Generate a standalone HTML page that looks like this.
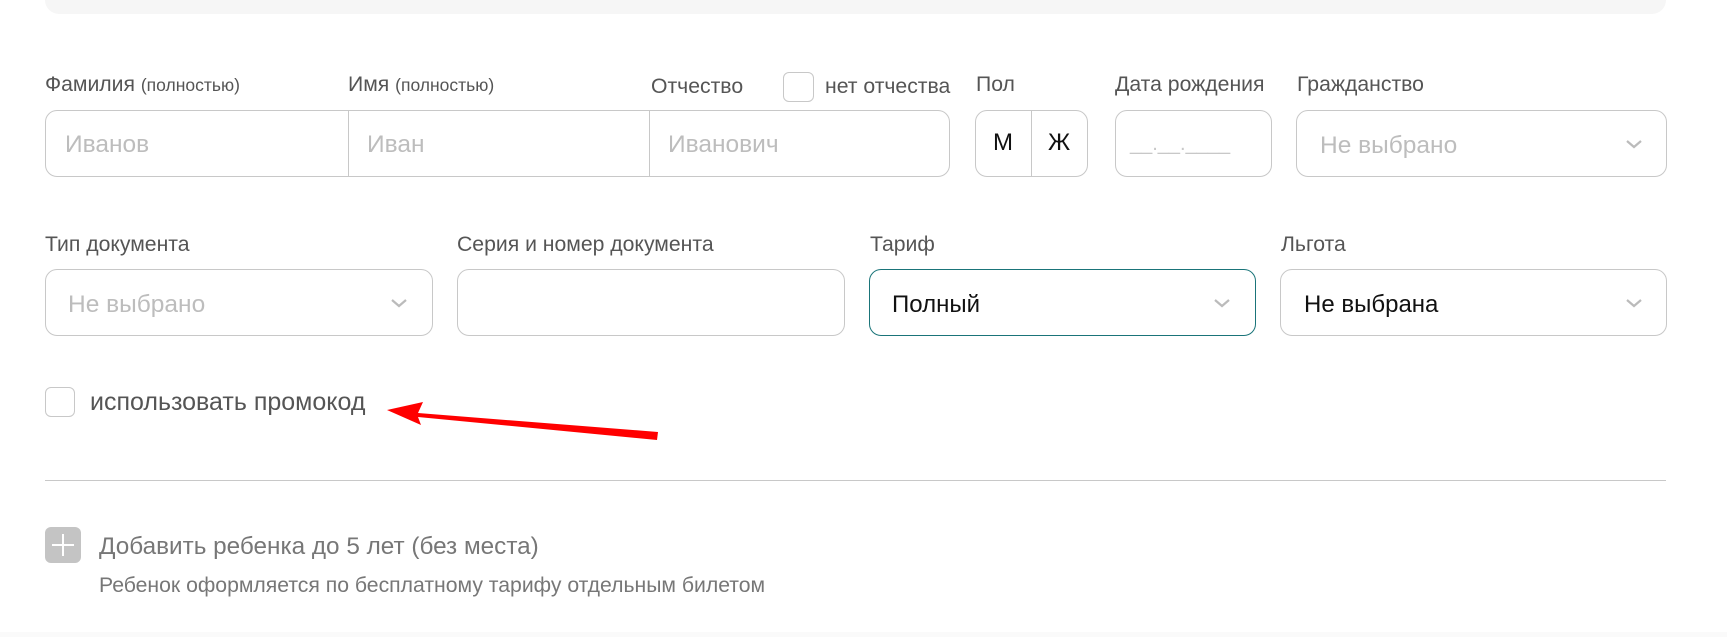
<!DOCTYPE html>
<html><head><meta charset="utf-8"><style>
*{box-sizing:border-box;margin:0;padding:0}
body{width:1727px;height:637px;background:#fff;position:relative;overflow:hidden;font-family:"Liberation Sans",sans-serif;color:#555}
.a{position:absolute;white-space:nowrap}
.lbl{font-size:21.2px;color:#555;line-height:24px}
.sm{font-size:17.5px}
.box{position:absolute;border:1px solid #c8c8c8;border-radius:12px;background:#fff}
.ph{position:absolute;font-size:24.5px;color:#bdbdbd;line-height:28px}
.val{position:absolute;font-size:24px;color:#111;line-height:28px}
.chev{position:absolute;width:18px;height:10px}
.div{position:absolute;top:0;bottom:0;width:1px;background:#c8c8c8}
.cb{position:absolute;border:1px solid #c8c8c8;border-radius:6px;background:#fff}
</style></head><body>
<div class="a" style="left:45px;top:-20px;width:1621px;height:34px;background:#f6f6f6;border-radius:0 0 14px 14px"></div>

<div class="a lbl" style="left:45px;top:73px">Фамилия <span class="sm">(полностью)</span></div>
<div class="a lbl" style="left:348px;top:73px">Имя <span class="sm">(полностью)</span></div>
<div class="a lbl" style="left:651px;top:75px">Отчество</div>
<div class="cb" style="left:783px;top:72px;width:31px;height:30px"></div>
<div class="a lbl" style="left:825px;top:75px">нет отчества</div>
<div class="a lbl" style="left:976px;top:73px">Пол</div>
<div class="a lbl" style="left:1115px;top:73px">Дата рождения</div>
<div class="a lbl" style="left:1297px;top:73px">Гражданство</div>

<div class="box" style="left:45px;top:110px;width:905px;height:67px">
 <div class="div" style="left:302px"></div><div class="div" style="left:603px"></div>
 <div class="ph" style="left:19px;top:20px">Иванов</div>
 <div class="ph" style="left:321px;top:20px">Иван</div>
 <div class="ph" style="left:622px;top:20px">Иванович</div>
</div>
<div class="box" style="left:975px;top:110px;width:113px;height:67px">
 <div class="div" style="left:55px"></div>
 <div class="val" style="left:17px;top:18px">М</div>
 <div class="val" style="left:72px;top:18px">Ж</div>
</div>
<div class="box" style="left:1115px;top:110px;width:157px;height:67px">
 <div class="ph" style="left:14px;top:19px;font-size:20px;color:#c8c8c8">__.__.____</div>
</div>
<div class="box" style="left:1296px;top:110px;width:371px;height:67px">
 <div class="ph" style="left:23px;top:21px">Не выбрано</div>
 <svg class="chev" style="left:328px;top:28px" viewBox="0 0 18 10"><path d="M2 2l7 6 7-6" fill="none" stroke="#bbb" stroke-width="2.2"/></svg>
</div>

<div class="a lbl" style="left:45px;top:233px">Тип документа</div>
<div class="a lbl" style="left:457px;top:233px">Серия и номер документа</div>
<div class="a lbl" style="left:870px;top:233px">Тариф</div>
<div class="a lbl" style="left:1281px;top:233px">Льгота</div>

<div class="box" style="left:45px;top:269px;width:388px;height:67px">
 <div class="ph" style="left:22px;top:21px">Не выбрано</div>
 <svg class="chev" style="left:344px;top:28px" viewBox="0 0 18 10"><path d="M2 2l7 6 7-6" fill="none" stroke="#bbb" stroke-width="2.2"/></svg>
</div>
<div class="box" style="left:457px;top:269px;width:388px;height:67px"></div>
<div class="box" style="left:869px;top:269px;width:387px;height:67px;border-color:#1a7479">
 <div class="val" style="left:22px;top:21px">Полный</div>
 <svg class="chev" style="left:343px;top:28px" viewBox="0 0 18 10"><path d="M2 2l7 6 7-6" fill="none" stroke="#bbb" stroke-width="2.2"/></svg>
</div>
<div class="box" style="left:1280px;top:269px;width:387px;height:67px">
 <div class="val" style="left:23px;top:21px">Не выбрана</div>
 <svg class="chev" style="left:344px;top:28px" viewBox="0 0 18 10"><path d="M2 2l7 6 7-6" fill="none" stroke="#bbb" stroke-width="2.2"/></svg>
</div>

<div class="cb" style="left:45px;top:387px;width:30px;height:30px"></div>
<div class="a" style="left:90px;top:388px;font-size:25px;color:#555;line-height:28px">использовать промокод</div>
<svg class="a" style="left:0;top:0" width="1727" height="637"><path d="M387 410 L423 402 L418 413 L658 432 L657 440 L418 417 L421 425 Z" fill="#ff0000"/></svg>

<div class="a" style="left:45px;top:480px;width:1621px;height:1px;background:#c8c8c8"></div>

<div class="a" style="left:45px;top:527px;width:36px;height:36px;background:#c4c4c4;border-radius:6px">
 <div class="a" style="left:7px;top:17px;width:22px;height:2px;background:#fff"></div>
 <div class="a" style="left:17px;top:7px;width:2px;height:22px;background:#fff"></div>
</div>
<div class="a" style="left:99px;top:533px;font-size:24.3px;color:#777;line-height:28px">Добавить ребенка до 5 лет (без места)</div>
<div class="a" style="left:99px;top:574px;font-size:21.2px;color:#777;line-height:24px">Ребенок оформляется по бесплатному тарифу отдельным билетом</div>
<div class="a" style="left:0;top:632px;width:1727px;height:5px;background:#fafafa"></div>
</body></html>
